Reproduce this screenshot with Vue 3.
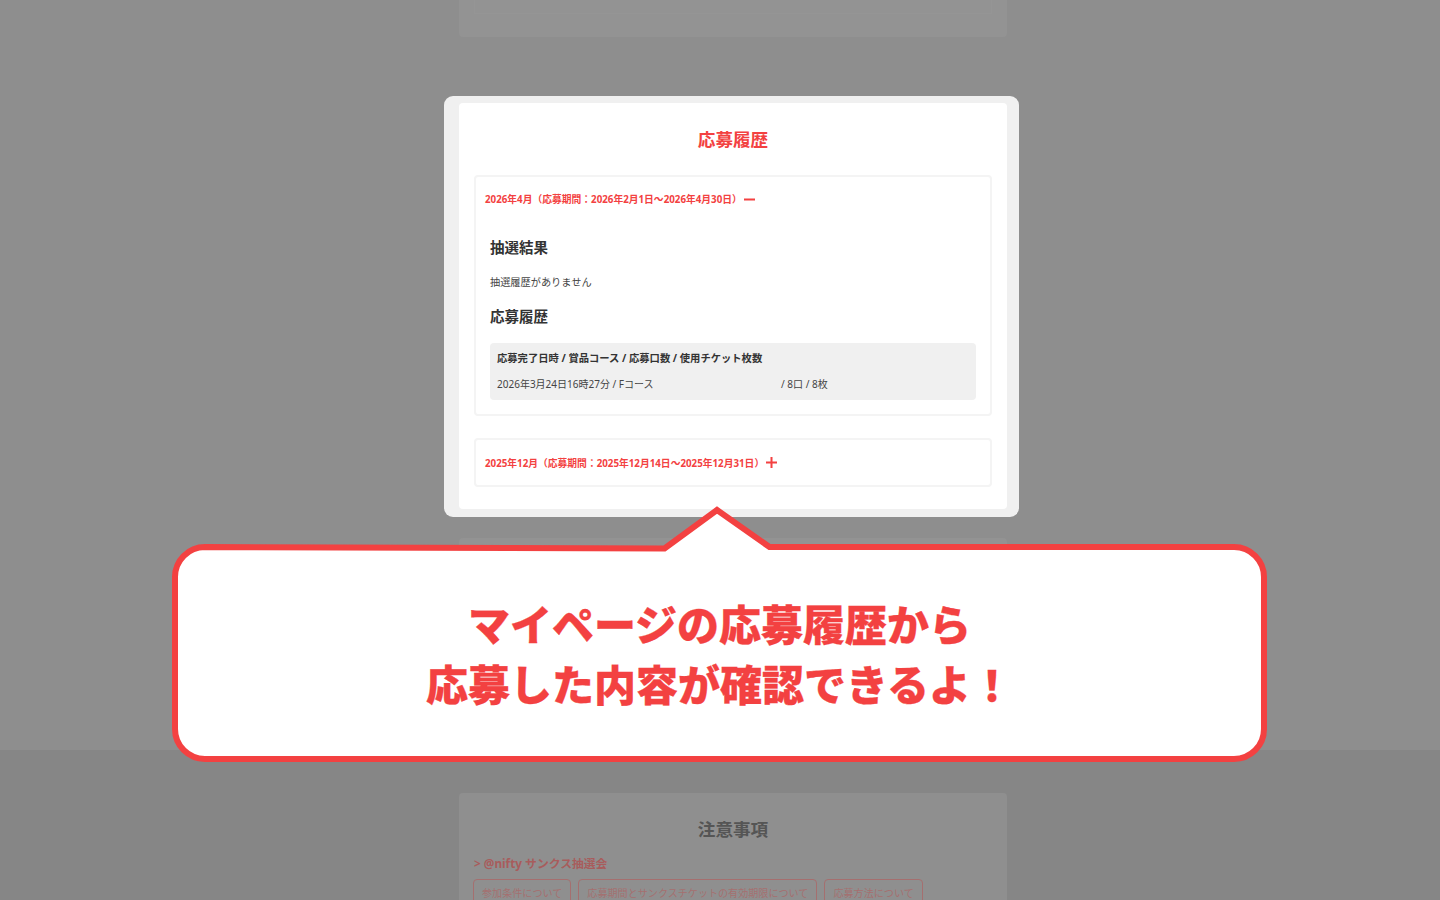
<script setup>
const noteLinks = ['参加条件について', '応募期間とサンクスチケットの有効期限について', '応募方法について']
</script>

<template>
  <div class="page">
    <section class="upper">
      <div class="card card-top"><div class="card-top-inner"></div></div>
      <div class="card card-mid"></div>
    </section>
    <section class="lower">
      <div class="card card-notes">
        <h2 class="notes-title">注意事項</h2>
        <p class="notes-sub">&gt; @nifty サンクス抽選会</p>
        <div class="note-links">
          <a v-for="link in noteLinks" :key="link" class="note-link">{{ link }}</a>
        </div>
      </div>
    </section>

    <div class="modal">
      <div class="modal-inner">
        <h2 class="modal-title">応募履歴</h2>
        <div class="acc acc-open">
          <div class="acc-head">
            <span>2026年4月（応募期間：2026年2月1日〜2026年4月30日）</span>
            <svg class="acc-icon" width="11" height="11" viewBox="0 0 11 11"><rect x="0" y="4.5" width="11" height="2" fill="#f34141" /></svg>
          </div>
          <div class="acc-body">
            <h3 class="sub-title">抽選結果</h3>
            <p class="empty">抽選履歴がありません</p>
            <h3 class="sub-title second">応募履歴</h3>
            <div class="history">
              <div class="history-head">応募完了日時 / 賞品コース / 応募口数 / 使用チケット枚数</div>
              <div class="history-row"><span class="course">2026年3月24日16時27分 / Fコース</span><span>/ 8口 / 8枚</span></div>
            </div>
          </div>
        </div>
        <div class="acc acc-closed">
          <div class="acc-head">
            <span>2025年12月（応募期間：2025年12月14日〜2025年12月31日）</span>
            <svg class="acc-icon" width="11" height="11" viewBox="0 0 11 11"><path d="M0 4.5h4.5V0h2v4.5H11v2H6.5V11h-2V6.5H0z" fill="#f34141" /></svg>
          </div>
        </div>
      </div>
    </div>

    <div class="bubble">
      <svg class="bubble-shape" width="1095" height="256" viewBox="0 0 1095 256">
        <path d="M33 41 L492.5 42.5 L545 4 L597.5 41 H1062 A30 30 0 0 1 1092 71 V223 A30 30 0 0 1 1062 253 H33 A30 30 0 0 1 3 223 V71 A30 30 0 0 1 33 41 Z" fill="#fff" stroke="#f34141" stroke-width="6" />
      </svg>
      <p class="bubble-text">マイページの応募履歴から<br />応募した内容が確認できるよ！</p>
    </div>
  </div>
</template>

<style scoped>
.page {
  position: relative;
  width: 1440px;
  height: 900px;
  overflow: hidden;
  font-family: "Noto Sans", "Noto Sans CJK JP", sans-serif;
  color: #333;
}
.upper {
  height: 750px;
  background: #8e8e8e;
  display: flex;
  flex-direction: column;
  align-items: center;
  padding-left: 26px;
  box-sizing: border-box;
}
.lower {
  height: 150px;
  background: #868686;
  display: flex;
  flex-direction: column;
  align-items: center;
  padding: 43px 0 0 26px;
  box-sizing: border-box;
}
.card {
  width: 548px;
  border-radius: 4px;
  box-sizing: border-box;
}
.card-top {
  height: 37px;
  flex: none;
  background: #939393;
  border-radius: 0 0 4px 4px;
  padding: 0 15px;
}
.card-top-inner {
  height: 14px;
  border: 1px solid #959595;
  border-top: 0;
  box-sizing: border-box;
}
.card-mid {
  height: 212px;
  flex: none;
  margin-top: 501px;
  background: #939393;
}
.card-notes {
  height: 200px;
  flex: none;
  background: #8f8f8f;
  padding: 26px 15px;
}
.notes-title {
  margin: 0;
  text-align: center;
  font-size: 17.6px;
  line-height: 20px;
  font-weight: 700;
  color: #555;
}
.notes-sub {
  margin: 16px 0 0;
  font-size: 11.8px;
  line-height: 16px;
  font-weight: 700;
  color: #a85c5c;
}
.note-links {
  display: flex;
  gap: 7px;
  margin: 8px 0 0 -1px;
}
.note-link {
  border: 1px solid #a56f6f;
  border-radius: 4px;
  padding: 5px 8px;
  font-size: 10.08px;
  line-height: 16px;
  color: #a56f6f;
  white-space: nowrap;
}
.modal {
  position: absolute;
  left: 444px;
  top: 96px;
  width: 575px;
  height: 421px;
  box-sizing: border-box;
  padding: 7px 12px 8px 15px;
  background: #f0f0f0;
  border-radius: 9px;
}
.modal-inner {
  height: 100%;
  background: #fff;
  border-radius: 4px;
  padding: 25px 15px 0;
  box-sizing: border-box;
}
.modal-title {
  margin: 0;
  text-align: center;
  font-size: 17.6px;
  line-height: 22px;
  font-weight: 700;
  color: #f34141;
}
.acc {
  border: 2px solid #f4f4f4;
  border-radius: 4px;
  box-sizing: border-box;
}
.acc-open {
  height: 241px;
  margin-top: 25px;
}
.acc-closed {
  height: 49px;
  margin-top: 22px;
}
.acc-head {
  display: flex;
  align-items: center;
  gap: 2px;
  height: 45px;
  padding-left: 9px;
  font-size: 9.78px;
  font-weight: 700;
  color: #f34141;
  white-space: nowrap;
}
.acc-open .acc-head {
  height: 44px;
}
.acc-body {
  padding: 15px 14px 0;
}
.sub-title {
  margin: 0;
  font-size: 14.5px;
  line-height: 22px;
  font-weight: 700;
  color: #333;
}
.sub-title.second {
  margin-top: 15px;
}
.empty {
  margin: 16px 0 0;
  font-size: 10.2px;
  line-height: 16px;
  color: #444;
}
.history {
  margin-top: 16px;
  height: 57px;
  box-sizing: border-box;
  padding: 7px 7px;
  background: #f0f0f0;
  border-radius: 4px;
  font-size: 10px;
}
.history-head {
  font-size: 10.3px;
  font-weight: 700;
  line-height: 16px;
  color: #333;
}
.history-row {
  display: flex;
  margin-top: 10px;
  line-height: 16px;
  color: #444;
}
.course {
  width: 284px;
}
.bubble {
  position: absolute;
  left: 172px;
  top: 506px;
  width: 1095px;
  height: 256px;
}
.bubble-shape {
  position: absolute;
  left: 0;
  top: 0;
}
.bubble-text {
  position: relative;
  margin: 0;
  padding-top: 87px;
  text-align: center;
  font-size: 42px;
  line-height: 60px;
  font-weight: 900;
  color: #f34141;
  -webkit-text-stroke: 0.3px #f34141;
  font-family: "Noto Sans CJK JP", sans-serif;
  white-space: nowrap;
}
</style>
